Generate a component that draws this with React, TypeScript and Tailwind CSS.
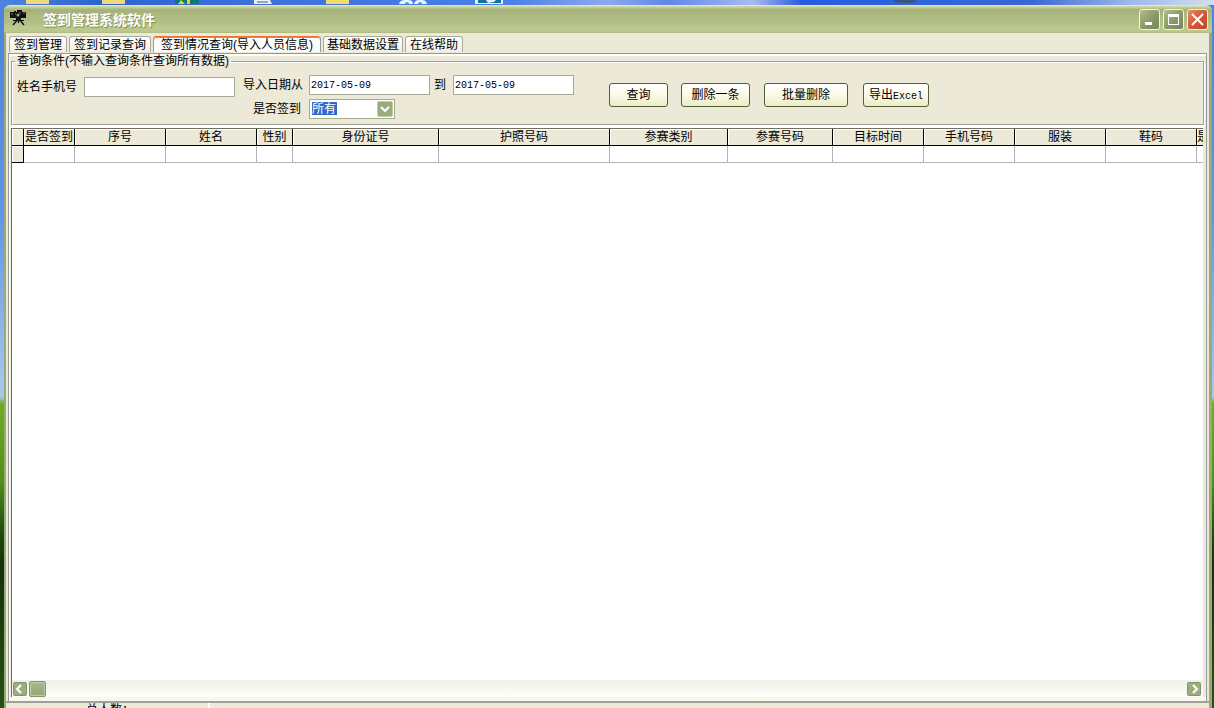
import React from "react";

interface Column {
  label: string;
  width: string;
  align?: string;
}

const columns: Column[] = [
  { label: "是否签到", width: "w-[51px]" },
  { label: "序号", width: "w-[91px]" },
  { label: "姓名", width: "w-[91px]" },
  { label: "性别", width: "w-9" },
  { label: "身份证号", width: "w-[146px]" },
  { label: "护照号码", width: "w-[171px]" },
  { label: "参赛类别", width: "w-[118px]" },
  { label: "参赛号码", width: "w-[105px]" },
  { label: "目标时间", width: "w-[91px]" },
  { label: "手机号码", width: "w-[91px]" },
  { label: "服装", width: "w-[91px]" },
  { label: "鞋码", width: "w-[91px]" },
  { label: "是否领取物品", width: "w-[91px]", align: "text-left" },
];

const tabs = [
  { label: "签到管理", width: "w-[58px]" },
  { label: "签到记录查询", width: "w-[82px]" },
  { label: "签到情况查询(导入人员信息)", width: "w-[168px]", active: true },
  { label: "基础数据设置", width: "w-[80px]" },
  { label: "在线帮助", width: "w-[58px]" },
];

// The slice of desktop that shows above the window
const DesktopStrip = () => (
  <svg className="block h-[5px] w-full shrink-0" aria-hidden="true">
    <defs>
      <linearGradient id="sky" x1="0" x2="1" y1="0" y2="0">
        <stop offset="0" stopColor="#4f86e0" />
        <stop offset="0.08" stopColor="#2f62d2" />
        <stop offset="0.2" stopColor="#3d70dc" />
        <stop offset="0.42" stopColor="#4a7ee8" />
        <stop offset="0.5" stopColor="#8fa9f0" />
        <stop offset="0.55" stopColor="#5f86ea" />
        <stop offset="0.62" stopColor="#a9bbf2" />
        <stop offset="0.66" stopColor="#2b5be0" />
        <stop offset="0.76" stopColor="#2f63de" />
        <stop offset="0.85" stopColor="#3b67d6" />
        <stop offset="0.93" stopColor="#9db8ea" />
        <stop offset="1" stopColor="#d3ddf0" />
      </linearGradient>
    </defs>
    <rect width="100%" height="5" fill="url(#sky)" />
    <rect x="26" width="23" height="4" fill="#f0d878" />
    <rect x="102" width="23" height="4" fill="#f0d878" />
    <rect x="326" width="23" height="4" fill="#f3dd66" />
    <path d="M175 0h24v4h-24z" fill="#0c7a74" />
    <path d="M178 4l3-4 4 4zM187 4V0h3v4z" fill="#f2d31c" />
    <path d="M254 0h16l2 4h-18z" fill="#eef1f4" />
    <path d="M257 2h11" stroke="#555" />
    <path d="M399 4q1-4 6-4h3q5 0 5 4zM414 4q1-4 5-4h3q4 0 5 4z" fill="#e8f6fb" />
    <path d="M405 4q0-2 2-2t2 2zM418 4q0-2 2-2t2 2z" fill="#35a5d6" />
    <path d="M475 0h28v4h-28z" fill="#e4f1f6" />
    <path d="M478 0h8l2 3 6-1 2-2h5v3h-23z" fill="#156f9c" />
    <ellipse cx="905" cy="0" rx="12" ry="3" fill="#3c5378" />
  </svg>
);

const CameraIcon = () => (
  <svg width="16" height="16" viewBox="0 0 16 16" aria-hidden="true">
    <path d="M0 2h4V1h2v1h1V0h5v2h4v6H0z" fill="#111" />
    <path d="M5 4h1M9 3h2M13 3h2M1 4h2" stroke="#6f7a66" />
    <circle cx="8" cy="5" r="1.500" fill="#99a38c" />
    <path d="M6 8h5v2H6z" fill="#111" />
    <path d="M8 9L3 15M9 9l5 6M8.500 9v4" stroke="#111" strokeWidth="1.400" fill="none" />
    <path d="M3 10.500h11" stroke="#111" />
  </svg>
);

const windowButton =
  "flex size-[21px] items-center justify-center rounded-[3px] border border-[#f2f5dc] bg-linear-to-br from-[#b2bf8c] via-[#8c9b69] to-[#76855a]";

const TitleBar = () => (
  <header className="flex h-7 shrink-0 items-center rounded-t-md border-t border-[#e3ebbd] bg-[linear-gradient(#d3dca8_0,#a3b078_4px,#aeba82_9px,#b0bf84_16px,#bcca8e_22px,#b9c78d_26px,#93a26b_28px)] pl-1.5 pr-1">
    <div className="pb-1">
      <CameraIcon />
    </div>
    <h1 className="ml-[17px] flex-1 text-sm leading-5 font-bold text-white [text-shadow:1px_1px_1px_#7c8a55]">签到管理系统软件</h1>
    <div className="flex gap-[3px]">
      <button type="button" aria-label="最小化" className={windowButton}>
        <svg width="15" height="15" viewBox="0 0 15 15"><path d="M3 10h7v3H3z" fill="#fff" /></svg>
      </button>
      <button type="button" aria-label="最大化" className={windowButton}>
        <svg width="15" height="15" viewBox="0 0 15 15"><path d="M2 2h11v11H2zM3 5v7h9V5z" fillRule="evenodd" fill="#fff" /></svg>
      </button>
      <button
        type="button"
        aria-label="关闭"
        className="flex size-[21px] items-center justify-center rounded-[3px] border border-[#fbe9dc] bg-linear-to-br from-[#e9886a] via-[#d4583a] to-[#c0442a]"
      >
        <svg width="15" height="15" viewBox="0 0 15 15"><path d="M2 2l11 11M13 2L2 13" stroke="#fff" strokeWidth="2" /></svg>
      </button>
    </div>
  </header>
);

const TabStrip = () => (
  <div role="tablist" className="flex h-[17px] items-start gap-[2px] pl-px">
    {tabs.map((tab) => (
      <button
        key={tab.label}
        type="button"
        role="tab"
        aria-selected={!!tab.active}
        className={`${tab.width} h-4 rounded-t-[3px] border-x border-t text-center leading-[14px] whitespace-nowrap ${
          tab.active
            ? "border-x-[#919b9c] border-t-[#e5762c] bg-[#fcfcfe] shadow-[inset_0_1px_0_#e8834a]"
            : "border-[#aaa99b] bg-linear-to-b from-white to-[#f1efe2]"
        }`}
      >
        {tab.label}
      </button>
    ))}
  </div>
);

const textBox = "h-5 border border-[#a5a998] bg-white px-px font-['Liberation_Mono',monospace] text-[10px] text-black outline-none";
const pushButton =
  "h-6 rounded-[3px] border border-[#4f6032] bg-linear-to-b from-white via-[#fafae6] to-[#ecebc8] text-center leading-[22px] whitespace-nowrap";

const QueryForm = () => (
  <fieldset className="mx-[2px] h-[71px] border border-[#a3a196] shadow-[inset_1px_1px_0_#fff,1px_1px_0_#fff]">
    <legend className="ml-[3px] px-[2px] leading-[14px]">查询条件(不输入查询条件查询所有数据)</legend>
    <div className="flex items-start pt-[7px] pl-[5px]">
      <div className="flex items-center gap-[7px] pt-[2px]">
        <label htmlFor="keyword">姓名手机号</label>
        <input id="keyword" type="text" className={`${textBox} w-[151px]`} />
      </div>
      <div className="ml-2 grid gap-y-1">
        <div className="flex items-center">
          <label htmlFor="from" className="mr-[6px] w-[60px] text-right">导入日期从</label>
          <input id="from" type="text" defaultValue="2017-05-09" className={`${textBox} w-[121px]`} />
          <label htmlFor="to" className="mr-[7px] ml-1">到</label>
          <input id="to" type="text" defaultValue="2017-05-09" className={`${textBox} w-[121px]`} />
        </div>
        <div className="flex items-center">
          <label htmlFor="signed" className="mr-2 w-[58px] text-right">是否签到</label>
          <div className="relative">
            <select
              id="signed"
              className="block h-5 w-[86px] appearance-none border border-[#a5ac8c] bg-white bg-[linear-gradient(#316ac5,#316ac5)] bg-size-[25px_13px] bg-position-[2px_2px] bg-no-repeat pl-[2px] leading-4 text-white outline-none"
            >
              <option className="text-black">所有</option>
              <option className="text-black">是</option>
              <option className="text-black">否</option>
            </select>
            <svg className="pointer-events-none absolute top-[2px] right-[2px]" width="16" height="16" viewBox="0 0 16 16" aria-hidden="true">
              <rect x="0.5" y="0.5" width="15" height="15" rx="1.5" fill="#9aab7c" stroke="#c3cda8" />
              <path d="M4 6l4 4 4-4" fill="none" stroke="#fff" strokeWidth="2" />
            </svg>
          </div>
        </div>
      </div>
      <div className="ml-[35px] flex items-center pt-2">
        <button type="button" className={`${pushButton} w-[59px]`}>查询</button>
        <button type="button" className={`${pushButton} ml-[13px] w-[69px]`}>删除一条</button>
        <button type="button" className={`${pushButton} ml-[14px] w-[84px]`}>批量删除</button>
        <button type="button" className={`${pushButton} ml-[15px] w-[66px]`}>
          导出<span className="font-['Liberation_Mono',monospace] text-[10px]">Excel</span>
        </button>
      </div>
    </div>
  </fieldset>
);

const ResultGrid = () => (
  <div className="mr-[3px] ml-[2px] flex min-h-0 flex-1 flex-col border-t border-l border-[#716f64] bg-white">
    <div className="flex-1 overflow-hidden">
      <table className="w-[1276px] table-fixed border-separate border-spacing-0">
        <thead>
          <tr className="h-[17px] bg-[#ece9d8]">
            <th className="w-3 border-r border-b border-black p-0 shadow-[inset_1px_1px_0_#fff]"></th>
            {columns.map((col) => (
              <th
                key={col.label}
                className={`${col.width} ${col.align ?? "text-center"} overflow-hidden border-r border-b border-black p-0 leading-4 font-normal whitespace-nowrap shadow-[inset_1px_1px_0_#fff]`}
              >
                {col.label}
              </th>
            ))}
          </tr>
        </thead>
        <tbody>
          <tr className="h-[17px]">
            <td className="border-r border-b border-black bg-[#ece9d8] p-0 shadow-[inset_1px_1px_0_#fff]"></td>
            {columns.map((col) => (
              <td key={col.label} className="border-r border-b border-[#b4b4b4] p-0"></td>
            ))}
          </tr>
        </tbody>
      </table>
    </div>
    <div className="flex h-[17px] shrink-0 items-center justify-between bg-linear-to-b from-[#f0f0ea] to-[#fefefb] pr-px">
      <div className="flex gap-px">
        <ScrollArrow label="向左滚动" path="M9 4L5 8l4 4" />
        <div className="h-4 w-[17px] rounded-[2px] border border-[#83936a] bg-linear-to-b from-[#a9b98b] to-[#93a577] shadow-[inset_0_0_0_1px_#c0cca6]"></div>
      </div>
      <ScrollArrow label="向右滚动" path="M7 4l4 4-4 4" />
    </div>
  </div>
);

const ScrollArrow: React.FC<{ label: string; path: string }> = ({ label, path }) => (
  <button type="button" aria-label={label} className="size-4">
    <svg width="16" height="16" viewBox="0 0 16 16">
      <rect x="1.5" y="1.5" width="13" height="13" rx="1" fill="#9dad80" stroke="#83936a" />
      <path d={path} fill="none" stroke="#fff" strokeWidth="2" />
    </svg>
  </button>
);

export default function App() {
  return (
    <div className="flex h-screen flex-col overflow-hidden bg-[linear-gradient(#4d82dd_0,#5f94e6_30%,#a9c8ee_56%,#6fae22_57%,#4f8f1c_68%,#1f4d10_75%,#16300c_80%,#235217_100%)] font-['Liberation_Sans','Noto_Sans_CJK_SC',sans-serif] text-xs leading-4 text-black">
      <DesktopStrip />
      <div className="mr-[2px] ml-1 flex min-h-0 flex-1 flex-col">
        <TitleBar />
        <main className="flex min-h-0 flex-1 flex-col border-r-[3px] border-l-2 border-[#9aaa72] bg-[#ece9d8] pt-[3px]">
          <div className="flex min-h-0 flex-1 flex-col px-[2px]">
            <TabStrip />
            <section className="flex min-h-0 flex-1 flex-col border border-[#919b9c] border-b-0 shadow-[inset_1px_2px_0_#fff]">
              <QueryForm />
              <div className="mx-[2px] mt-px h-[2px] shrink-0 bg-white"></div>
              <ResultGrid />
              <div className="h-1 shrink-0 bg-[#f8f7f0]"></div>
            </section>
          </div>
          <footer className="flex h-[7px] shrink-0 items-start overflow-hidden border-t-2 border-[#a3a196]">
            <div className="w-[204px] border-r-2 border-white pl-[80px] leading-[14px]">总人数：</div>
          </footer>
        </main>
      </div>
    </div>
  );
}
